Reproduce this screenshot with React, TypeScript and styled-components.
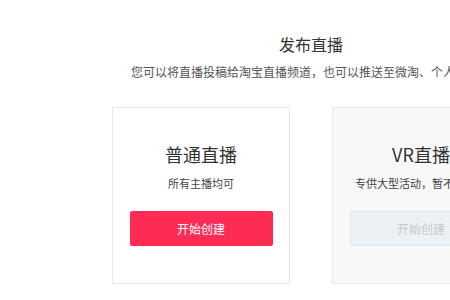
import styled, { createGlobalStyle } from 'styled-components';

const GlobalStyle = createGlobalStyle`
  html, body {
    margin: 0;
    padding: 0;
    background: #ffffff;
    overflow: hidden;
  }
  body {
    font-family: "Noto Sans CJK SC", "Noto Sans", sans-serif;
  }
`;

const Page = styled.main`
  width: 622px;
  padding-top: 32px;
  display: flex;
  flex-direction: column;
  align-items: center;
`;

const Title = styled.h1`
  margin: 0;
  font-size: 16px;
  line-height: 24px;
  font-weight: 400;
  color: #333333;
`;

const Intro = styled.p`
  margin: 7px 0 0;
  font-size: 12px;
  line-height: 18px;
  color: #555555;
  white-space: nowrap;
`;

const Cards = styled.div`
  display: flex;
  gap: 42px;
  margin-top: 26px;
`;

const Card = styled.section<{ $muted?: boolean }>`
  box-sizing: border-box;
  width: 178px;
  height: 177px;
  padding: 33px 16px 0;
  border: 1px solid #e8e8e8;
  background: ${(p) => (p.$muted ? '#f8f8f8' : '#ffffff')};
  display: flex;
  flex-direction: column;
  align-items: center;
`;

const CardTitle = styled.h2`
  margin: 0;
  font-size: 18px;
  line-height: 26px;
  font-weight: 400;
  color: #333333;
  white-space: nowrap;
`;

const CardNote = styled.p`
  margin: 8px 0 0;
  font-size: 11px;
  line-height: 16px;
  color: #444444;
  white-space: nowrap;
`;

const Button = styled.button`
  box-sizing: border-box;
  margin-top: 20px;
  width: 143px;
  height: 35px;
  border-radius: 2px;
  font-family: inherit;
  font-size: 12px;
  border: 1px solid #fe2c55;
  background: #fe2c55;
  color: #ffffff;
  cursor: pointer;

  &:disabled {
    background: #ecf1f6;
    border-color: #dfe5ec;
    color: #c3c8ce;
    cursor: not-allowed;
  }
`;

const App = (): JSX.Element => {
  return (
    <>
      <GlobalStyle />
      <Page>
        <Title>发布直播</Title>
        <Intro>您可以将直播投稿给淘宝直播频道，也可以推送至微淘、个人主页。</Intro>
        <Cards>
          <Card>
            <CardTitle>普通直播</CardTitle>
            <CardNote>所有主播均可</CardNote>
            <Button>开始创建</Button>
          </Card>
          <Card $muted>
            <CardTitle>VR直播</CardTitle>
            <CardNote>专供大型活动，暂不可申请</CardNote>
            <Button disabled>开始创建</Button>
          </Card>
        </Cards>
      </Page>
    </>
  );
};

export default App;
